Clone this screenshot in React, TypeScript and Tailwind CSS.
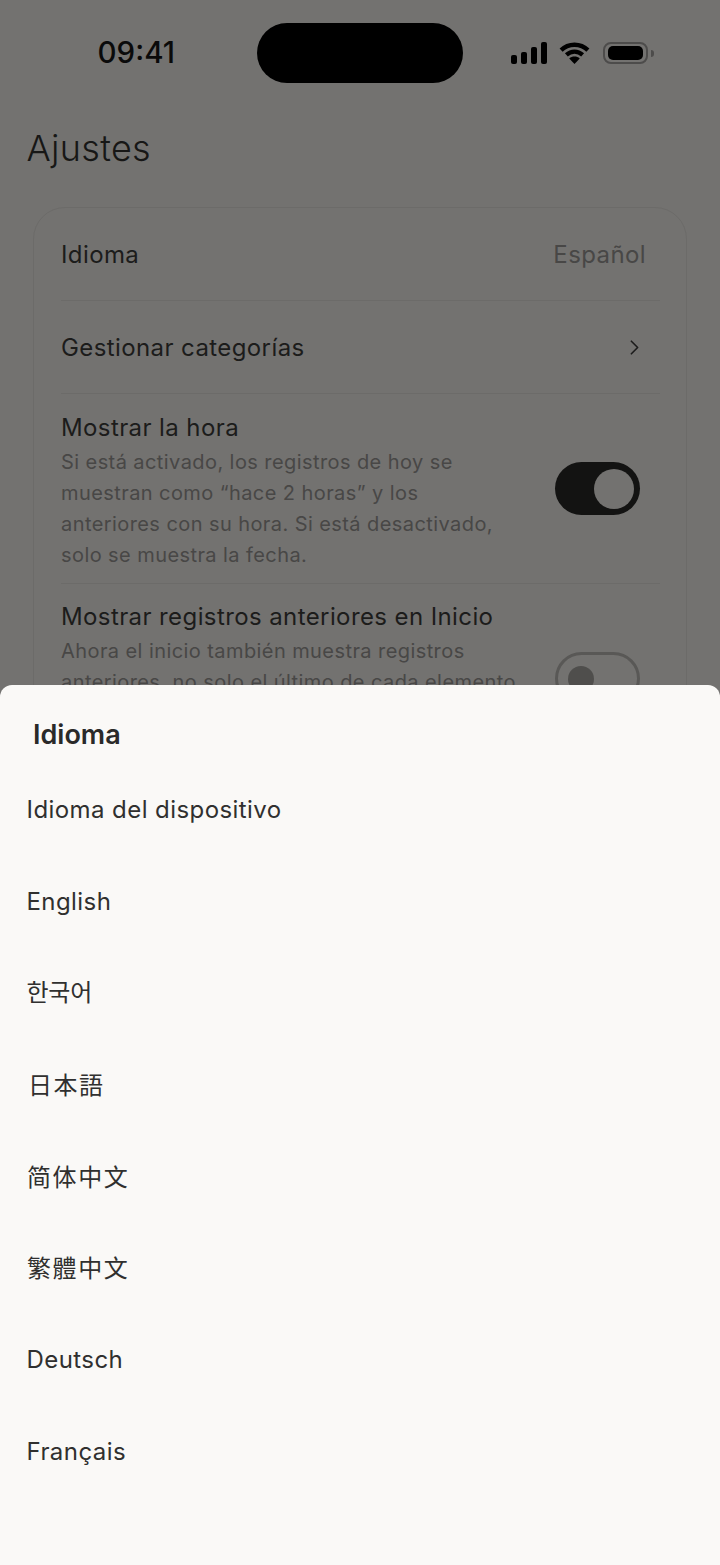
import { ChevronRight } from "lucide-react";

const font = "font-['Inter','Noto_Sans_CJK_KR','Noto_Sans_CJK_JP',sans-serif]";

const languages = [
  { label: "Idioma del dispositivo", cls: "h-[92px] pl-[26.5px] tracking-[0.43px]" },
  { label: "English", cls: "h-[91px] pl-[26.5px] tracking-[0.43px]" },
  { label: "한국어", cls: "h-[92px] pl-[26.5px] tracking-[-0.25px] font-['Inter','Noto_Sans_CJK_KR',sans-serif]" },
  { label: "日本語", cls: "h-[92px] pt-[2px] pl-[28px] tracking-[1.5px] font-['Inter','Noto_Sans_CJK_JP',sans-serif]" },
  { label: "简体中文", cls: "h-[91px] pt-[2px] pl-[27px] tracking-[1.6px] font-['Inter','Noto_Sans_CJK_SC',sans-serif]" },
  { label: "繁體中文", cls: "h-[92px] pt-[2px] pl-[27px] tracking-[1.6px] font-['Inter','Noto_Sans_CJK_TC',sans-serif]" },
  { label: "Deutsch", cls: "h-[91px] pl-[26.5px] tracking-[0.43px]" },
  { label: "Français", cls: "h-[92px] pt-[2px] pl-[26.5px] tracking-[0.43px]" },
];

function Toggle({ on }: { on: boolean }) {
  if (on) {
    return (
      <div className="flex h-[53px] w-[85px] shrink-0 items-center justify-end rounded-full bg-[#131312] pr-[6px]">
        <div className="h-[40px] w-[40px] rounded-full bg-[#737270]" />
      </div>
    );
  }
  return (
    <div className="flex h-[53px] w-[85px] shrink-0 items-center rounded-full border-[3px] border-[#595856] pl-[10px]">
      <div className="h-[26px] w-[26px] rounded-full bg-[#4f4e4c]" />
    </div>
  );
}

function StatusIcons() {
  return (
    <div className="flex items-center">
      <svg width="36" height="22" viewBox="0 0 36 22" fill="#000">
        <rect x="0" y="13" width="6" height="9" rx="2" />
        <rect x="10" y="10" width="6" height="12" rx="2" />
        <rect x="20" y="5" width="6" height="17" rx="2" />
        <rect x="30" y="0" width="6" height="22" rx="2" />
      </svg>
      <svg className="ml-[12px]" width="31" height="22" viewBox="0 0 32 23" fill="none" stroke="#000" strokeWidth="4.5">
        <path d="M2 8.5C9.5 1 22.5 1 30 8.5" />
        <path d="M7.5 13.5C12.5 9 19.5 9 24.5 13.5" />
        <path d="M16 23L10.5 17.3C13.5 14.6 18.5 14.6 21.5 17.3Z" fill="#000" stroke="none" />
      </svg>
      <div className="ml-[13px] flex items-center gap-[3px]">
        <div className="flex h-[22px] w-[45px] items-center justify-center rounded-[8px] border-2 border-[#4d4c4b] px-[3px] py-[2px]">
          <div className="h-full w-full rounded-[5px] bg-black" />
        </div>
        <div className="h-[7px] w-[3px] rounded-r-full bg-[#4d4c4b]" />
      </div>
    </div>
  );
}

export default function App() {
  return (
    <div className={`relative h-[1565px] w-[720px] overflow-hidden bg-[#737270] ${font}`}>
      {/* Status bar */}
      <div className="flex h-[106px] items-start pt-[23px]">
        <div className="flex h-[60px] w-[257px] items-center justify-end pr-[82px] text-[29.5px] leading-none font-medium text-[#0a0a0a]">
          09:41
        </div>
        <div className="h-[60px] w-[206px] rounded-[30px] bg-black" />
        <div className="flex h-[60px] flex-1 items-center pl-[48px]">
          <StatusIcons />
        </div>
      </div>

      {/* Title */}
      <h1 className="ml-[26.5px] h-[101px] pt-[18px] text-[36px] leading-[48px] font-light tracking-[0.3px] text-[#171716]">
        Ajustes
      </h1>

      {/* Card */}
      <div className="mx-[33px] rounded-[32px] border border-[#6c6b69] pr-[26px] pl-[27px]">
        <div className="flex h-[93px] items-center justify-between border-b border-[#6c6b69] pt-[1px] text-[24px] tracking-[0.4px]">
          <span className="text-[#1c1c1b]">Idioma</span>
          <span className="pr-[14px] text-[#484746]">Español</span>
        </div>
        <div className="flex h-[93px] items-center justify-between border-b border-[#6c6b69] text-[24px] tracking-[0.4px] text-[#1c1c1b]">
          <span className="pt-[2px]">Gestionar categorías</span>
          <ChevronRight size={25} strokeWidth={1.6} className="mr-[13px] text-[#1c1c1b]" />
        </div>
        <div className="flex h-[190px] items-center justify-between border-b border-[#6c6b69] pr-[20px]">
          <div className="w-[440px] self-start pt-[18px]">
            <div className="text-[24px] leading-[32px] tracking-[0.4px] text-[#1c1c1b]">Mostrar la hora</div>
            <p className="mt-[3px] text-[20px] leading-[31px] tracking-[0.42px] text-[#484746]">
              Si está activado, los registros de hoy se muestran como “hace 2 horas” y los anteriores con su hora. Si está desactivado, solo se muestra la fecha.
            </p>
          </div>
          <Toggle on />
        </div>
        <div className="flex h-[189px] items-center justify-between pr-[20px]">
          <div className="w-[470px] self-start pt-[17px]">
            <div className="text-[24px] leading-[32px] tracking-[0.4px] text-[#1c1c1b]">Mostrar registros anteriores en Inicio</div>
            <p className="mt-[3px] text-[20px] leading-[31px] tracking-[0.42px] text-[#484746]">
              Ahora el inicio también muestra registros anteriores, no solo el último de cada elemento.
            </p>
          </div>
          <Toggle on={false} />
        </div>
      </div>

      {/* Bottom sheet */}
      <div className="absolute inset-x-0 top-[685px] bottom-0 rounded-t-[12px] bg-[#faf9f7] text-[#30302f]">
        <div className="h-[79px] pt-[32px] pl-[33px] text-[27px] leading-[36px] font-semibold text-[#2a2a29]">Idioma</div>
        <ul>
          {languages.map((l) => (
            <li key={l.label} className={`flex items-center text-[24px] ${l.cls}`}>
              {l.label}
            </li>
          ))}
        </ul>
      </div>
    </div>
  );
}
